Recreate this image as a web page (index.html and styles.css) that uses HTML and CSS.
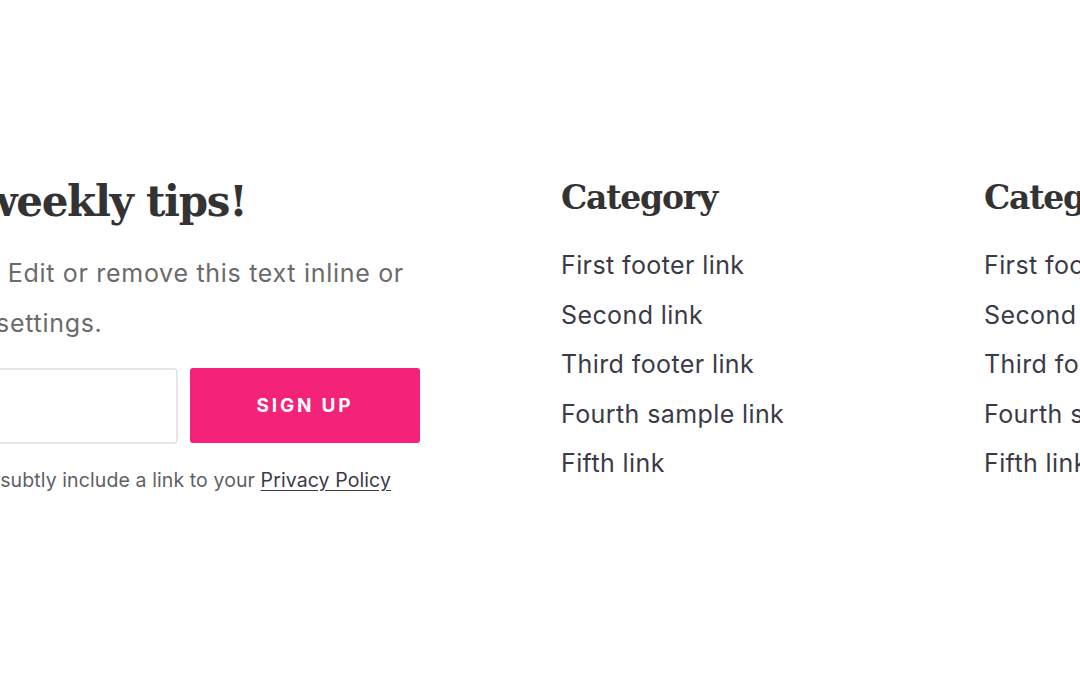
FILE: index.html
```html
<!DOCTYPE html>
<html lang="en">
<head>
<meta charset="utf-8">
<title>Footer</title>
<link rel="stylesheet" href="styles.css">
</head>
<body>
<footer class="footer">
  <div class="footer-inner">
    <section class="newsletter">
      <h2 class="newsletter-title">Get weekly tips!</h2>
      <p class="newsletter-text">Get mail. Edit or remove this text inline or<br>Content settings.</p>
      <form class="signup">
        <input class="signup-input" type="email" aria-label="Email address">
        <button class="signup-button" type="button">Sign up</button>
      </form>
      <p class="signup-note">Now aim to subtly include a link to your <a href="#" class="privacy">Privacy Policy</a></p>
    </section>
    <nav class="link-col">
      <h3 class="col-title">Category</h3>
      <ul class="col-links">
        <li><a href="#">First footer link</a></li>
        <li><a href="#">Second link</a></li>
        <li><a href="#">Third footer link</a></li>
        <li><a href="#">Fourth sample link</a></li>
        <li><a href="#">Fifth link</a></li>
      </ul>
    </nav>
    <nav class="link-col">
      <h3 class="col-title">Category</h3>
      <ul class="col-links">
        <li><a href="#">First footer link</a></li>
        <li><a href="#">Second link</a></li>
        <li><a href="#">Third footer link</a></li>
        <li><a href="#">Fourth sample link</a></li>
        <li><a href="#">Fifth link</a></li>
      </ul>
    </nav>
  </div>
</footer>
</body>
</html>
```

FILE: styles.css
```css
html, body {
  margin: 0;
  padding: 0;
  background: #ffffff;
  overflow: hidden;
}

body {
  font-family: "Inter", "Lato", sans-serif;
  color: #3b3b48;
}

.footer {
  width: 1080px;
  height: 675px;
  overflow: hidden;
}

.footer-inner {
  display: flex;
  align-items: flex-start;
  margin-left: -110px;
  padding-top: 176px;
  width: 1600px;
}

.newsletter {
  flex: 0 0 530px;
  min-width: 0;
  margin-right: 141px;
}

.newsletter-title {
  margin: 0;
  font-family: "DejaVu Serif", serif;
  font-weight: 700;
  font-size: 42px;
  line-height: 52px;
  letter-spacing: -1.3px;
  color: #333333;
  white-space: nowrap;
}

.newsletter-text {
  margin: 20px 0 0;
  font-size: 25px;
  line-height: 50px;
  letter-spacing: 0.7px;
  color: #6b6b6b;
  white-space: nowrap;
}

.signup {
  display: flex;
  gap: 12px;
  margin-top: 20px;
}

.signup-input {
  box-sizing: border-box;
  width: 288px;
  height: 76px;
  border: 2px solid #e6e6e6;
  border-radius: 4px;
  background: #fff;
}

.signup-button {
  box-sizing: border-box;
  width: 230px;
  height: 75px;
  border: 0;
  border-radius: 3px;
  background: #f5227a;
  color: #ffffff;
  font-family: "Inter", sans-serif;
  font-weight: 700;
  font-size: 19px;
  letter-spacing: 2.8px;
  text-transform: uppercase;
}

.signup-note {
  margin: 22px 0 0;
  font-size: 19.5px;
  line-height: 28px;
  letter-spacing: 0.1px;
  color: #5f5f66;
  white-space: nowrap;
}

.privacy {
  color: #3b3b48;
  text-decoration: underline;
  text-underline-offset: 3px;
}

.link-col {
  flex: 0 0 423px;
  min-width: 0;
}

.col-title {
  margin: 0;
  font-family: "DejaVu Serif", serif;
  font-weight: 700;
  font-size: 33px;
  line-height: 44px;
  letter-spacing: -1.2px;
  color: #333333;
  white-space: nowrap;
}

.col-links {
  list-style: none;
  margin: 25px 0 0;
  padding: 0;
}

.col-links li {
  height: 49.5px;
  line-height: 40px;
}

.col-links a {
  font-size: 25px;
  letter-spacing: 0.4px;
  color: #3b3b48;
  text-decoration: none;
  white-space: nowrap;
}
```
